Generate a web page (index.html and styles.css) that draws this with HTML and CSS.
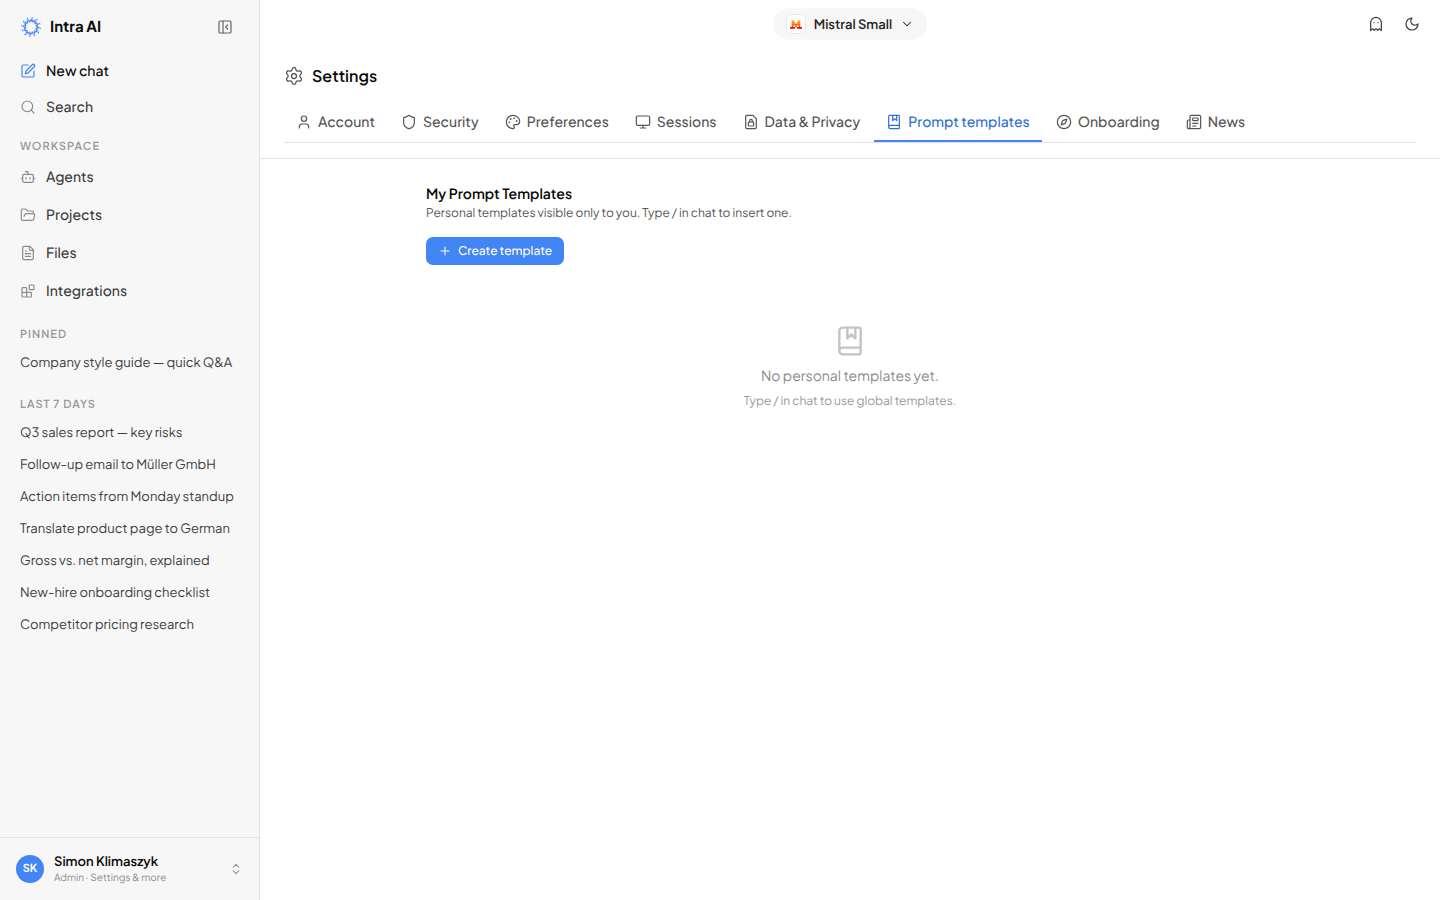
FILE: index.html
```html
<!DOCTYPE html>
<html lang="en">
<head>
    <meta charset="UTF-8">
    <meta name="viewport" content="width=device-width, initial-scale=1.0">
    <title>Intra AI - Settings</title>
    <link rel="stylesheet" href="styles.css">
</head>
<body>
    <aside class="sidebar">
        <div class="brand">
            <svg class="logo" viewBox="0 0 22 22">
                <defs>
                    <g id="ray">
                        <path d="M9.2 6.4C9.6 4.8 10.8 3.9 12.8 3.7"/>
                        <path d="M11.2 2.4C11.8 1.9 12.4 1.7 13.2 1.7" stroke-width="1"/>
                    </g>
                </defs>
                <use href="#ray"/>
                <use href="#ray" transform="rotate(30 11 11)"/>
                <use href="#ray" transform="rotate(60 11 11)"/>
                <use href="#ray" transform="rotate(90 11 11)"/>
                <use href="#ray" transform="rotate(120 11 11)"/>
                <use href="#ray" transform="rotate(150 11 11)"/>
                <use href="#ray" transform="rotate(180 11 11)"/>
                <use href="#ray" transform="rotate(210 11 11)"/>
                <use href="#ray" transform="rotate(240 11 11)"/>
                <use href="#ray" transform="rotate(270 11 11)"/>
                <use href="#ray" transform="rotate(300 11 11)"/>
                <use href="#ray" transform="rotate(330 11 11)"/>
            </svg>
            <span class="brand-name">Intra AI</span>
            <button class="icon-button" aria-label="Collapse sidebar">
                <svg class="icon" viewBox="0 0 24 24"><rect x="3" y="3" width="18" height="18" rx="2"/><path d="M9 3v18"/><path d="m16 15-3-3 3-3"/></svg>
            </button>
        </div>

        <nav class="actions">
            <a class="nav-link new-chat" href="#">
                <svg class="icon" viewBox="0 0 24 24"><path d="M12 3H5a2 2 0 0 0-2 2v14a2 2 0 0 0 2 2h14a2 2 0 0 0 2-2v-7"/><path d="M18.375 2.625a1 1 0 0 1 3 3l-9.013 9.014a2 2 0 0 1-.853.505l-2.873.84a.5.5 0 0 1-.62-.62l.84-2.873a2 2 0 0 1 .506-.852z"/></svg>
                New chat
            </a>
            <a class="nav-link" href="#">
                <svg class="icon" viewBox="0 0 24 24"><circle cx="11" cy="11" r="8"/><path d="m21 21-4.3-4.3"/></svg>
                Search
            </a>
        </nav>

        <nav class="workspace">
            <h2 class="label">Workspace</h2>
            <a class="nav-link" href="#">
                <svg class="icon" viewBox="0 0 24 24"><path d="M12 8V4H8"/><rect x="4" y="8" width="16" height="12" rx="2"/><path d="M2 14h2M20 14h2M15 13v2M9 13v2"/></svg>
                Agents
            </a>
            <a class="nav-link" href="#">
                <svg class="icon" viewBox="0 0 24 24"><path d="m6 14 1.5-2.9A2 2 0 0 1 9.24 10H20a2 2 0 0 1 1.94 2.5l-1.54 6a2 2 0 0 1-1.95 1.5H4a2 2 0 0 1-2-2V5a2 2 0 0 1 2-2h3.9a2 2 0 0 1 1.69.9l.81 1.2a2 2 0 0 0 1.67.9H18a2 2 0 0 1 2 2v2"/></svg>
                Projects
            </a>
            <a class="nav-link" href="#">
                <svg class="icon" viewBox="0 0 24 24"><path d="M15 2H6a2 2 0 0 0-2 2v16a2 2 0 0 0 2 2h12a2 2 0 0 0 2-2V7Z"/><path d="M14 2v4a2 2 0 0 0 2 2h4M10 9H8M16 13H8M16 17H8"/></svg>
                Files
            </a>
            <a class="nav-link" href="#">
                <svg class="icon" viewBox="0 0 24 24"><rect x="14" y="3" width="7" height="7" rx="1"/><path d="M10 21V8a1 1 0 0 0-1-1H4a1 1 0 0 0-1 1v12a1 1 0 0 0 1 1h12a1 1 0 0 0 1-1v-5a1 1 0 0 0-1-1H3"/></svg>
                Integrations
            </a>
        </nav>

        <div class="history">
            <section>
                <h2 class="label">Pinned</h2>
                <a class="chat" href="#">Company style guide — quick Q&amp;A</a>
            </section>
            <section>
                <h2 class="label">Last 7 days</h2>
                <a class="chat" href="#">Q3 sales report — key risks</a>
                <a class="chat" href="#">Follow-up email to Müller GmbH</a>
                <a class="chat" href="#">Action items from Monday standup</a>
                <a class="chat" href="#">Translate product page to German</a>
                <a class="chat" href="#">Gross vs. net margin, explained</a>
                <a class="chat" href="#">New-hire onboarding checklist</a>
                <a class="chat" href="#">Competitor pricing research</a>
            </section>
        </div>

        <button class="user">
            <span class="avatar">SK</span>
            <span class="user-text">
                <span class="user-name">Simon Klimaszyk</span>
                <span class="user-role">Admin · Settings &amp; more</span>
            </span>
            <svg class="icon small" viewBox="0 0 24 24"><path d="m7 15 5 5 5-5"/><path d="m7 9 5-5 5 5"/></svg>
        </button>
    </aside>

    <main class="main">
        <div class="topbar">
            <button class="model">
                <span class="model-logo">
                    <svg viewBox="0 0 14 10">
                        <path fill="#ffb000" d="M2 0h3v2H2zM9 0h3v2H9z"/>
                        <path fill="#ff9100" d="M2 2h4v2H2zM8 2h4v2H8z"/>
                        <path fill="#ff6a00" d="M2 4h10v2H2z"/>
                        <path fill="#f54516" d="M2 6h2v2H2zM6 6h2v2H6zM10 6h2v2h-2z"/>
                        <path fill="#df1a12" d="M0 8h6v2H0zM8 8h6v2H8z"/>
                    </svg>
                </span>
                Mistral Small
                <svg class="icon small" viewBox="0 0 24 24"><path d="m6 9 6 6 6-6"/></svg>
            </button>
            <div class="topbar-tools">
                <button class="icon-button" aria-label="Private chat">
                    <svg class="icon" viewBox="0 0 24 24"><path d="M9 10h.01M15 10h.01"/><path d="M12 2a8 8 0 0 0-8 8v12l3-3 2.5 2.5L12 19l2.5 2.5L17 19l3 3V10a8 8 0 0 0-8-8z"/></svg>
                </button>
                <button class="icon-button" aria-label="Dark mode">
                    <svg class="icon" viewBox="0 0 24 24"><path d="M12 3a6 6 0 0 0 9 9 9 9 0 1 1-9-9Z"/></svg>
                </button>
            </div>
        </div>

        <header class="settings-header">
            <h1 class="title">
                <svg class="icon" viewBox="0 0 24 24"><path d="M9.671 4.136a2.34 2.34 0 0 1 4.659 0 2.34 2.34 0 0 0 3.319 1.915 2.34 2.34 0 0 1 2.33 4.033 2.34 2.34 0 0 0 0 3.831 2.34 2.34 0 0 1-2.33 4.033 2.34 2.34 0 0 0-3.319 1.915 2.34 2.34 0 0 1-4.659 0 2.34 2.34 0 0 0-3.32-1.915 2.34 2.34 0 0 1-2.33-4.033 2.34 2.34 0 0 0 0-3.831A2.34 2.34 0 0 1 6.35 6.051a2.34 2.34 0 0 0 3.319-1.915"/><circle cx="12" cy="12" r="3"/></svg>
                Settings
            </h1>
            <nav class="tabs">
                <a class="tab" href="#">
                    <svg class="icon" viewBox="0 0 24 24"><circle cx="12" cy="7" r="4"/><path d="M19 21v-2a4 4 0 0 0-4-4H9a4 4 0 0 0-4 4v2"/></svg>
                    Account
                </a>
                <a class="tab" href="#">
                    <svg class="icon" viewBox="0 0 24 24"><path d="M20 13c0 5-3.5 7.5-7.66 8.95a1 1 0 0 1-.67-.01C7.5 20.5 4 18 4 13V6a1 1 0 0 1 1-1c2 0 4.5-1.2 6.24-2.72a1.17 1.17 0 0 1 1.52 0C14.51 3.81 17 5 19 5a1 1 0 0 1 1 1z"/></svg>
                    Security
                </a>
                <a class="tab" href="#">
                    <svg class="icon" viewBox="0 0 24 24"><path d="M12 22a1 1 0 0 1 0-20 10 9 0 0 1 10 9 5 5 0 0 1-5 5h-2.25a1.75 1.75 0 0 0-1.4 2.8l.3.4a1.75 1.75 0 0 1-1.4 2.8z"/><g fill="currentColor"><circle cx="13.5" cy="6.5" r=".5"/><circle cx="17.5" cy="10.5" r=".5"/><circle cx="6.5" cy="12.5" r=".5"/><circle cx="8.5" cy="7.5" r=".5"/></g></svg>
                    Preferences
                </a>
                <a class="tab" href="#">
                    <svg class="icon" viewBox="0 0 24 24"><rect x="2" y="3" width="20" height="14" rx="2"/><path d="M8 21h8M12 17v4"/></svg>
                    Sessions
                </a>
                <a class="tab" href="#">
                    <svg class="icon" viewBox="0 0 24 24"><path d="M15 2H6a2 2 0 0 0-2 2v16a2 2 0 0 0 2 2h12a2 2 0 0 0 2-2V7z"/><rect x="8" y="12" width="8" height="6" rx="1"/><path d="M10 12v-2a2 2 0 1 1 4 0v2"/></svg>
                    Data &amp; Privacy
                </a>
                <a class="tab active" href="#" aria-current="page">
                    <svg class="icon" viewBox="0 0 24 24"><path d="M10 2v8l3-3 3 3V2"/><path d="M4 19.5v-15A2.5 2.5 0 0 1 6.5 2H19a1 1 0 0 1 1 1v18a1 1 0 0 1-1 1H6.5a1 1 0 0 1 0-5H20"/></svg>
                    Prompt templates
                </a>
                <a class="tab" href="#">
                    <svg class="icon" viewBox="0 0 24 24"><circle cx="12" cy="12" r="10"/><path d="m16.24 7.76-1.804 5.411a2 2 0 0 1-1.265 1.265L7.76 16.24l1.804-5.411a2 2 0 0 1 1.265-1.265z"/></svg>
                    Onboarding
                </a>
                <a class="tab" href="#">
                    <svg class="icon" viewBox="0 0 24 24"><path d="M15 18h-5M18 14h-8"/><path d="M4 22h16a2 2 0 0 0 2-2V4a2 2 0 0 0-2-2H8a2 2 0 0 0-2 2v16a2 2 0 0 1-4 0v-9a2 2 0 0 1 2-2h2"/><rect x="10" y="6" width="8" height="4" rx="1"/></svg>
                    News
                </a>
            </nav>
        </header>

        <section class="content">
            <h2 class="content-title">My Prompt Templates</h2>
            <p class="content-text">Personal templates visible only to you. Type / in chat to insert one.</p>
            <button class="create">
                <svg class="icon small" viewBox="0 0 24 24"><path d="M5 12h14M12 5v14"/></svg>
                Create template
            </button>
            <div class="empty">
                <svg class="icon empty-icon" viewBox="0 0 24 24"><path d="M10 2v8l3-3 3 3V2"/><path d="M4 19.5v-15A2.5 2.5 0 0 1 6.5 2H19a1 1 0 0 1 1 1v18a1 1 0 0 1-1 1H6.5a1 1 0 0 1 0-5H20"/></svg>
                <p class="empty-title">No personal templates yet.</p>
                <p class="empty-text">Type / in chat to use global templates.</p>
            </div>
        </section>
    </main>
</body>
</html>
```
FILE: styles.css
```css
* {
    box-sizing: border-box;
}
body {
    margin: 0;
    display: flex;
    min-height: 100vh;
    font-family: "Plus Jakarta Sans", Inter, sans-serif;
    font-size: 14px;
    line-height: 20px;
    text-rendering: geometricPrecision;
    color: #3d3d3d;
    background-color: #ffffff;
}
h1, h2, p {
    margin: 0;
}
a {
    color: inherit;
    text-decoration: none;
}
button {
    font: inherit;
    color: inherit;
    text-rendering: inherit;
    background: none;
    border: none;
    padding: 0;
    cursor: pointer;
}
.icon {
    width: 16px;
    height: 16px;
    flex-shrink: 0;
    fill: none;
    stroke: currentColor;
    stroke-width: 1.8;
    stroke-linecap: round;
    stroke-linejoin: round;
}
.icon.small {
    width: 14px;
    height: 14px;
}
.icon-button {
    display: flex;
    align-items: center;
    justify-content: center;
    width: 36px;
    height: 36px;
}

/* Sidebar */
.sidebar {
    display: flex;
    flex-direction: column;
    flex: 0 0 260px;
    min-width: 0;
    background-color: #f7f7f7;
    border-right: 1px solid #e2e2e2;
}
.brand {
    display: flex;
    align-items: center;
    height: 53px;
    padding: 0 16px 0 20px;
}
.brand .icon-button {
    margin-left: auto;
    color: #666666;
}
.logo {
    width: 22px;
    height: 22px;
    fill: none;
    stroke: #4285f4;
    stroke-width: 1.4;
}
.brand-name {
    margin-left: 8px;
    font-size: 15px;
    font-weight: 700;
    color: #0a0a0a;
}
.nav-link {
    display: flex;
    align-items: center;
    gap: 10px;
    height: 38px;
    padding: 0 20px;
    font-weight: 500;
}
.nav-link .icon {
    color: #8c8c8c;
}
.actions .nav-link {
    height: 36px;
}
.nav-link.new-chat {
    color: #0a0a0a;
}
.new-chat .icon {
    color: #4285f4;
}
.workspace {
    margin-top: 10px;
}
.label {
    padding: 0 20px;
    font-size: 11px;
    line-height: 23px;
    font-weight: 600;
    letter-spacing: 1px;
    text-transform: uppercase;
    color: #999999;
}
.history {
    flex: 1;
}
.history section {
    padding: 13px 0 2px;
}
.chat {
    display: block;
    padding: 6px 20px;
    font-size: 13px;
    white-space: nowrap;
    overflow: hidden;
}
.user {
    display: flex;
    align-items: center;
    gap: 10px;
    height: 63px;
    padding: 0 16px;
    border-top: 1px solid #e2e2e2;
    text-align: left;
}
.avatar {
    width: 28px;
    height: 28px;
    border-radius: 50%;
    background-color: #4285f4;
    color: #ffffff;
    font-size: 11px;
    line-height: 28px;
    font-weight: 700;
    text-align: center;
}
.user-text {
    display: flex;
    flex-direction: column;
    flex: 1;
}
.user-name {
    font-size: 13px;
    line-height: 18px;
    font-weight: 600;
    color: #0a0a0a;
}
.user-role {
    font-size: 10px;
    line-height: 16px;
    color: #8c8c8c;
}
.user .icon {
    color: #8c8c8c;
}

/* Main area */
.main {
    flex: 1;
    min-width: 0;
}
.topbar {
    display: grid;
    grid-template-columns: 1fr auto 1fr;
    align-items: center;
    height: 48px;
    padding: 0 10px;
}
.model {
    grid-column: 2;
    display: flex;
    align-items: center;
    gap: 8px;
    height: 32px;
    padding: 0 13px;
    border-radius: 16px;
    background-color: #f7f7f7;
    font-size: 13px;
    font-weight: 600;
    color: #262626;
}
.model-logo {
    display: flex;
    align-items: center;
    justify-content: center;
    width: 20px;
    height: 20px;
    border: 1px solid #e8e8e8;
    border-radius: 5px;
    background-color: #ffffff;
}
.model-logo svg {
    width: 12px;
    height: 9px;
}
.topbar-tools {
    display: flex;
    justify-content: flex-end;
}
.settings-header {
    padding: 16px 24px 15px;
    border-bottom: 1px solid #e2e2e2;
}
.title {
    display: flex;
    align-items: center;
    gap: 8px;
    font-size: 16px;
    line-height: 24px;
    font-weight: 600;
    color: #0a0a0a;
}
.title .icon {
    width: 20px;
    height: 20px;
    stroke-width: 1.5;
    color: #4d4d4d;
}
.tabs {
    display: flex;
    gap: 2px;
    margin-top: 16px;
    border-bottom: 1px solid #e2e2e2;
}
.tab {
    display: flex;
    align-items: center;
    gap: 6px;
    padding: 8px 12px;
    border-bottom: 2px solid transparent;
    font-weight: 500;
    color: #555555;
    white-space: nowrap;
}
.tab.active {
    color: #2f6fd6;
    border-bottom-color: #4285f4;
}

/* Prompt templates */
.content {
    max-width: 896px;
    margin: 0 auto;
    padding: 25px 24px;
}
.content-title {
    font-size: 14px;
    line-height: 20px;
    font-weight: 600;
    color: #0a0a0a;
}
.content-text {
    font-size: 12px;
    line-height: 18px;
    color: #555555;
}
.create {
    display: flex;
    align-items: center;
    gap: 6px;
    height: 28px;
    margin-top: 15px;
    padding: 0 12px;
    border-radius: 7px;
    background-color: #4285f4;
    color: #ffffff;
    font-size: 12px;
    font-weight: 500;
}
.empty {
    display: flex;
    flex-direction: column;
    align-items: center;
    padding-top: 60px;
}
.empty-icon {
    width: 32px;
    height: 32px;
    color: #c4c4c4;
}
.empty-title {
    margin-top: 9px;
    color: #8c8c8c;
}
.empty-text {
    margin-top: 5px;
    font-size: 12px;
    color: #999999;
}
```
